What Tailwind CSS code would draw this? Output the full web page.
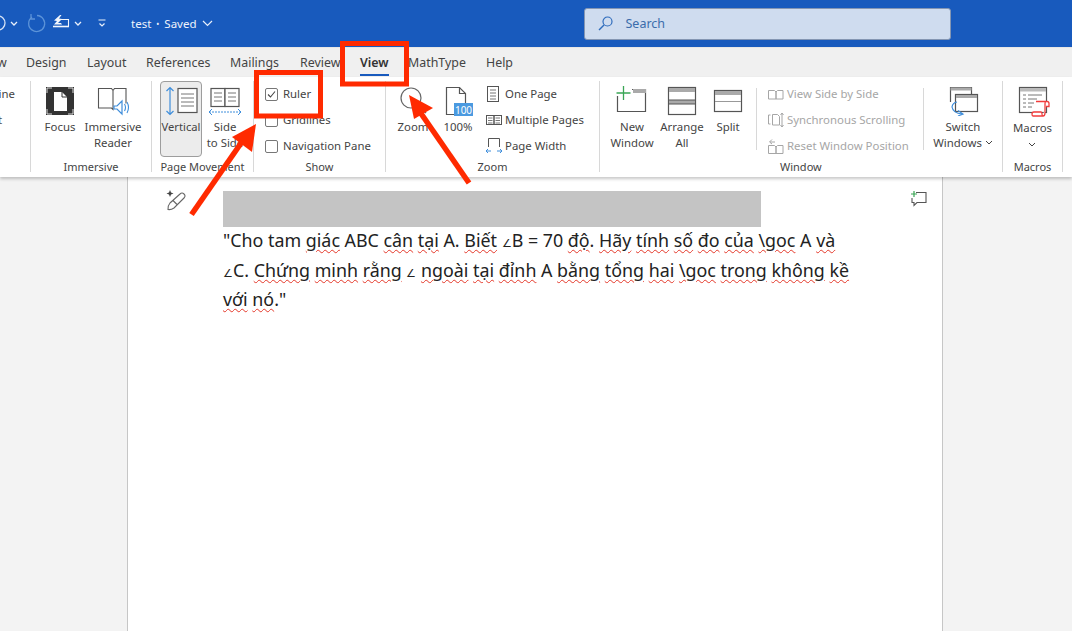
<!DOCTYPE html>
<html lang="vi">
<head>
<meta charset="utf-8">
<title>test - Word</title>
<script src="https://cdn.jsdelivr.net/npm/@tailwindcss/browser@4"></script>
</head>
<body class="w-[1072px] h-[631px] overflow-hidden relative flex flex-col bg-[#f3f3f3] font-['Noto_Sans',sans-serif] text-[12px] text-[#444]">

<!-- Title bar -->
<header class="h-[47px] shrink-0 bg-[#185abd] flex items-center text-white">
  <svg class="w-[120px] h-[47px] shrink-0" viewBox="0 0 120 47" fill="none">
    <circle cx="-2" cy="23" r="7" stroke="#d5e2f5" stroke-width="1.3"/>
    <path d="M11 22l3 3 3-3M75 22l3 3 3-3" stroke="#e8effa" stroke-width="1.3"/>
    <path d="M32 17a8 8 0 1 0 5-1.500M31 14v5h4" stroke="#5c93d8" stroke-width="1.3"/>
    <path d="M60 19.500h8.500v7" stroke="#f2f6fc" stroke-width="1.100"/>
    <path d="M53 26.500h16" stroke="#f2f6fc" stroke-width="1.600"/>
    <path d="M60 15l-6 5.500 3 .5-3 3.500h8l-1-1.500h-3l4-4-3-.5 2.500-3.500z" fill="#f2f6fc"/>
    <path d="M98.500 20h7M99.500 23.500l2.500 2.500 2.500-2.500" stroke="#e8effa" stroke-width="1.200"/>
  </svg>
  <div class="ml-[11px] flex items-center gap-[5px] text-[11.5px] text-[#eef3fb]">
    <span>test</span><span class="text-[8px]">•</span><span>Saved</span>
    <svg class="w-[11px] h-[7px]" viewBox="0 0 11 7" fill="none"><path d="M1 1l4.500 4.500L10 1" stroke="#e8effa" stroke-width="1.200"/></svg>
  </div>
  <div class="ml-[371px] w-[367px] h-[32px] rounded-[3px] bg-[#cfdcef] border border-[#8496b3] flex items-center pl-[13px] text-[#3b6cab] text-[12.500px]">
    <svg class="w-[15px] h-[15px]" viewBox="0 0 15 15" fill="none"><circle cx="9.500" cy="5.500" r="4.500" stroke="#2f6cbc" stroke-width="1.200"/><path d="M6 9l-5 5" stroke="#2f6cbc" stroke-width="1.400"/></svg>
    <span class="ml-[13px] pt-[1px]">Search</span>
  </div>
</header>

<!-- Tabs -->
<nav class="h-[30px] shrink-0 bg-[#f0f0f0] border-t border-[#e6e6e6] pt-[2px] flex items-center text-[12.400px] text-[#444] overflow-hidden">
  <span class="w-[26px] -ml-[3px] pl-0">w</span>
  <span class="w-[61px] ml-[3px]">Design</span>
  <span class="w-[59px]">Layout</span>
  <span class="w-[84px]">References</span>
  <span class="w-[70px]">Mailings</span>
  <span class="w-[60px]">Review</span>
  <span class="w-[48px] relative font-semibold text-[#333]">View<span class="absolute left-0 w-[29px] -bottom-[3px] h-[2px] bg-[#185abd]"></span></span>
  <span class="w-[78px]">MathType</span>
  <span>Help</span>
</nav>

<!-- Ribbon -->
<section class="h-[100px] shrink-0 bg-white pt-[4px] flex relative z-10 shadow-[0_2px_3px_rgba(0,0,0,0.22)] text-[11.400px] leading-[16px]">
  <!-- clipped Views group -->
  <div class="w-[31px] h-[91px] border-r border-[#d8d8d8] overflow-hidden">
    <div class="h-[26px] flex items-center justify-end pr-[15px] whitespace-nowrap">Outline</div>
    <div class="h-[26px] flex items-center justify-end pr-[28px] whitespace-nowrap">Draft</div>
  </div>

  <!-- Immersive -->
  <div class="w-[121px] h-[91px] border-r border-[#d8d8d8] flex flex-col">
    <div class="h-[76px] flex pl-[6px]">
      <div class="w-[46px] pt-[5px] flex flex-col items-center text-center">
        <svg class="w-[30px] h-[30px] mb-[3px]" viewBox="0 0 30 30" fill="none"><rect x="1" y="1" width="28" height="28" fill="#333"/><path d="M2 7V2h5M23 2h5v5M28 23v5h-5M7 28H2v-5" stroke="#ddd" stroke-width="1"/><path d="M9 6h8l5 5v14H9z" fill="#fff"/><path d="M17 6v5h5" stroke="#333" stroke-width="1"/></svg>
        <span>Focus</span>
      </div>
      <div class="w-[60px] pt-[5px] flex flex-col items-center text-center">
        <svg class="w-[34px] h-[30px] mb-[3px]" viewBox="0 0 34 30" fill="none"><path d="M2.500 2.500h13l1.500 2v19l-1.500-1.500h-13zM17 4.500l1.500-2h11.500v15" stroke="#555" stroke-width="1.100"/><path d="M18 20h3l5-5v13l-5-5h-3z" fill="#fff" stroke="#3f8edb" stroke-width="1.200"/><path d="M28.500 18q2 3.500 0 7M31 16q3 5.500 0 11" stroke="#3f8edb" stroke-width="1.100"/></svg>
        <span class="leading-[16px]">Immersive<br>Reader</span>
      </div>
    </div>
    <div class="leading-[10px] mt-[5px] text-center text-[11px]">Immersive</div>
  </div>

  <!-- Page Movement -->
  <div class="w-[102px] h-[91px] border-r border-[#d8d8d8] flex flex-col">
    <div class="h-[76px] flex pl-[8px]">
      <div class="w-[42px] h-[76px] rounded-[4px] bg-[#ececec] border border-[#9d9d9d] pt-[4px] flex flex-col items-center">
        <svg class="w-[34px] h-[30px] mb-[3px]" viewBox="0 0 34 30" fill="none"><path d="M6 2v26M2.500 5L6 1.500 9.500 5M2.500 25L6 28.500 9.500 25" stroke="#3f8edb" stroke-width="1.200"/><rect x="14" y="2.500" width="19" height="24" fill="#fff" stroke="#555" stroke-width="1.200"/><path d="M17 8h13M17 12h13M17 16h13M17 20h13" stroke="#777"/></svg>
        <span class="text-[11.200px] whitespace-nowrap">Vertical</span>
      </div>
      <div class="w-[46px] pt-[5px] flex flex-col items-center text-center">
        <svg class="w-[34px] h-[30px] mb-[3px]" viewBox="0 0 34 30" fill="none"><rect x="3" y="2.500" width="14" height="18" fill="#fff" stroke="#555" stroke-width="1.200"/><rect x="17" y="2.500" width="14" height="18" fill="#fff" stroke="#555" stroke-width="1.200"/><path d="M6 7h8M6 11h8M6 15h8M20 7h8M20 11h8M20 15h8" stroke="#777"/><path d="M1 26h32" stroke="#3f8edb" stroke-dasharray="2 1"/><path d="M4 23l-3 3 3 3M30 23l3 3-3 3" stroke="#3f8edb"/></svg>
        <span class="whitespace-nowrap">Side<br>to Side</span>
      </div>
    </div>
    <div class="leading-[10px] mt-[5px] text-center text-[11px]">Page Movement</div>
  </div>

  <!-- Show -->
  <div class="w-[132px] h-[91px] border-r border-[#d8d8d8] flex flex-col">
    <div class="h-[76px] pl-[11px] flex flex-col">
      <div class="h-[26px] shrink-0 flex items-center gap-[5px]">
        <span class="w-[13px] h-[13px] border border-[#777] rounded-[2px] flex items-center justify-center"><svg class="w-[9px] h-[9px]" viewBox="0 0 9 9" fill="none"><path d="M1 4.500l2.500 2.500L8 1.500" stroke="#444" stroke-width="1.100"/></svg></span><span>Ruler</span>
      </div>
      <div class="h-[26px] shrink-0 flex items-center gap-[5px]"><span class="w-[13px] h-[13px] border border-[#777] rounded-[2px]"></span><span>Gridlines</span></div>
      <div class="h-[26px] shrink-0 flex items-center gap-[5px]"><span class="w-[13px] h-[13px] border border-[#777] rounded-[2px]"></span><span>Navigation Pane</span></div>
    </div>
    <div class="leading-[10px] mt-[5px] text-center text-[11px]">Show</div>
  </div>

  <!-- Zoom -->
  <div class="w-[214px] h-[91px] border-r border-[#d8d8d8] flex flex-col">
    <div class="h-[76px] flex pl-[6px]">
      <div class="w-[42px] pt-[5px] flex flex-col items-center">
        <svg class="w-[30px] h-[30px] mb-[3px]" viewBox="0 0 30 30" fill="none"><circle cx="13" cy="12" r="10" stroke="#666" stroke-width="1.200"/><path d="M21 20l7 7" stroke="#666" stroke-width="1.500"/></svg>
        <span>Zoom</span>
      </div>
      <div class="w-[48px] pt-[5px] flex flex-col items-center">
        <svg class="w-[30px] h-[30px] mb-[3px]" viewBox="0 0 30 30" fill="none"><path d="M3.500 1.500h13l6 6v21h-19z" fill="#fff" stroke="#555" stroke-width="1.200"/><path d="M16.500 1.500v6h6" stroke="#555" stroke-width="1.200"/><rect x="11" y="17" width="19" height="13" fill="#4b9ae0"/><text x="20.500" y="27.500" text-anchor="middle" font-size="10" fill="#fff" font-family="Noto Sans">100</text></svg>
        <span>100%</span>
      </div>
      <div class="flex flex-col ml-[3px]">
        <div class="h-[26px] shrink-0 flex items-center"><svg class="w-[20px] h-[18px]" viewBox="0 0 20 18" fill="none"><rect x="2.500" y="1.500" width="11" height="15" stroke="#555"/><path d="M5 5h6M5 8h6M5 11h6M5 14h6" stroke="#777"/></svg><span>One Page</span></div>
        <div class="h-[26px] shrink-0 flex items-center"><svg class="w-[20px] h-[18px]" viewBox="0 0 20 18" fill="none"><rect x="1.500" y="4.500" width="7.500" height="9" stroke="#555"/><rect x="9" y="4.500" width="7.500" height="9" stroke="#555"/><path d="M3 7h4.500M3 9.500h4.500M3 12h4.500M10.500 7h4.500M10.500 9.500h4.500M10.500 12h4.500" stroke="#777"/></svg><span>Multiple Pages</span></div>
        <div class="h-[26px] shrink-0 flex items-center"><svg class="w-[20px] h-[18px]" viewBox="0 0 20 18" fill="none"><path d="M3.500 10V1.500h11V10" stroke="#555"/><path d="M1 14h5M12 14h5" stroke="#3f8edb"/><path d="M3 12l-2 2 2 2M15 12l2 2-2 2" stroke="#3f8edb"/></svg><span>Page Width</span></div>
      </div>
    </div>
    <div class="leading-[10px] mt-[5px] text-center text-[11px]">Zoom</div>
  </div>

  <!-- Window -->
  <div class="w-[403px] h-[91px] border-r border-[#d8d8d8] flex flex-col">
    <div class="h-[76px] flex pl-[7px]">
      <div class="w-[50px] pt-[5px] flex flex-col items-center text-center">
        <svg class="w-[32px] h-[30px] mb-[3px]" viewBox="0 0 32 30" fill="none"><path d="M1.500 10v15.500h28V3.500H16" stroke="#555" stroke-width="1.200"/><rect x="17" y="3" width="13" height="4" fill="#aaa"/><path d="M7.500 0v14M0.500 7h14" stroke="#3aa655" stroke-width="1.300"/></svg>
        <span>New<br>Window</span>
      </div>
      <div class="w-[50px] pt-[5px] flex flex-col items-center text-center">
        <svg class="w-[30px] h-[30px] mb-[3px]" viewBox="0 0 30 30" fill="none"><rect x="1.500" y="1.500" width="27" height="27" stroke="#555" stroke-width="1.200"/><rect x="2" y="2" width="26" height="4" fill="#aaa"/><rect x="2" y="14" width="26" height="4" fill="#aaa"/><path d="M2 14h26M2 18h26" stroke="#555"/></svg>
        <span>Arrange<br>All</span>
      </div>
      <div class="w-[42px] pt-[5px] flex flex-col items-center">
        <svg class="w-[30px] h-[30px] mb-[3px]" viewBox="0 0 30 30" fill="none"><rect x="1.500" y="4.500" width="27" height="21" stroke="#555" stroke-width="1.200"/><rect x="2" y="5" width="26" height="4" fill="#aaa"/><path d="M2 15.500h26" stroke="#999"/></svg>
        <span>Split</span>
      </div>
      <div class="w-px h-[62px] mt-[7px] ml-[7px] bg-[#d8d8d8]"></div>
      <div class="flex flex-col ml-[10px] w-[156px] text-[#a6a6a6]">
        <div class="h-[26px] shrink-0 flex items-center"><svg class="w-[20px] h-[18px]" viewBox="0 0 20 18" fill="none"><path d="M1.500 5.500h6l1.500 1.500v7H1.500zM9 7l1.500-1.500h5.500V14H9z" stroke="#a6a6a6"/></svg><span>View Side by Side</span></div>
        <div class="h-[26px] shrink-0 flex items-center"><svg class="w-[20px] h-[18px]" viewBox="0 0 20 18" fill="none"><path d="M1.500 4v9M1.500 4h2M1.500 13h2M5.500 3.500h5l2 2V14h-7z" stroke="#a6a6a6"/><path d="M15 2v14M13.500 4L15 2l1.500 2M13.500 14L15 16l1.500-2" stroke="#a6a6a6"/></svg><span>Synchronous Scrolling</span></div>
        <div class="h-[26px] shrink-0 flex items-center"><svg class="w-[20px] h-[18px]" viewBox="0 0 20 18" fill="none"><path d="M1.500 8.500h6l1.500 1.500v6.500H1.500zM9 10l1.500-1.500h5.500v8H9z" stroke="#a6a6a6"/><path d="M8 5H3M5 2.500L2.500 5 5 7" stroke="#a6a6a6"/></svg><span>Reset Window Position</span></div>
      </div>
      <div class="w-px h-[62px] mt-[7px] bg-[#d8d8d8]"></div>
      <div class="w-[78px] pt-[5px] flex flex-col items-center text-center">
        <svg class="w-[32px] h-[30px] mb-[3px]" viewBox="0 0 32 30" fill="none"><path d="M3.500 16V1.500h21V8" stroke="#555" stroke-width="1.200"/><rect x="3.500" y="1.500" width="21" height="3" fill="#aaa"/><rect x="8.500" y="8.500" width="22" height="17" fill="#fff" stroke="#555" stroke-width="1.200"/><rect x="9" y="9" width="21" height="3" fill="#aaa"/><path d="M10 16a6 6 0 0 0-5 5q1 6 10 7M11 24.500l5 3.500-5 2" stroke="#3f8edb" stroke-width="1.200"/></svg>
        <span class="whitespace-nowrap">Switch<br>Windows <svg class="inline w-[8px] h-[5px] mb-[2px]" viewBox="0 0 8 5" fill="none"><path d="M1 1l3 3 3-3" stroke="#444"/></svg></span>
      </div>
    </div>
    <div class="leading-[10px] mt-[5px] text-[11px] pl-[180px]">Window</div>
  </div>

  <!-- Macros -->
  <div class="w-[60px] h-[91px] border-r border-[#d8d8d8] flex flex-col items-center">
    <div class="h-[76px] pt-[5px] flex flex-col items-center">
      <svg class="w-[32px] h-[31px] mb-[3px] overflow-visible" viewBox="0 0 32 31" fill="none"><rect x="3.500" y="1.500" width="27" height="25" fill="#fff" stroke="#555" stroke-width="1.200"/><rect x="4" y="2" width="26" height="3.500" fill="#bbb"/><path d="M7 9h3M12 9h14M7 13h3M12 13h9M7 17h3M12 17h6M7 21h3M12 21h4" stroke="#777"/><path d="M20 15.500h11q2 0 2 2v3h-3M30 15.500q-1 0-1 2V27q0 3-2 3H17q-1 0-1-2t2-2h7q1 0 1 2t1 2" fill="#fff" stroke="#f23c3c" stroke-width="1.300"/></svg>
      <span>Macros</span>
      <svg class="w-[8px] h-[5px] mt-[6px]" viewBox="0 0 8 5" fill="none"><path d="M1 1l3 3 3-3" stroke="#444"/></svg>
    </div>
    <div class="leading-[10px] mt-[5px] text-[11px]">Macros</div>
  </div>
</section>

<!-- Document -->
<main class="flex-1 bg-[#f3f3f3] overflow-hidden">
  <div class="ml-[127px] w-[816px] h-full bg-white border-x border-[#c6c6c6] flex">
    <div class="w-[95px] pl-[37px] pt-[12px]">
      <svg class="w-[22px] h-[22px]" viewBox="0 0 22 22" fill="none"><path d="M5 1l1 2.500L8.500 4.500 6 5.500 5 8 4 5.500 1.500 4.500 4 3.500z" fill="#444"/><path d="M19 5q2 2 0 4L9 19q-3 2-6 1.500Q2.500 17 5 14L15 5q2-2 4 0zM8 11.500l4 4" stroke="#666" stroke-width="1.100"/></svg>
    </div>
    <div class="w-[687px] pt-[14px] text-[17.850px] leading-[29.500px] text-[#222] whitespace-nowrap">
      <div class="w-[538px] h-[36px] bg-[#c4c4c4] mb-[-1px]"></div>
      <p class="h-[29.500px]">"Cho tam <span class="underline decoration-wavy decoration-[#e4382a] decoration-1 underline-offset-2">giác</span> ABC <span class="underline decoration-wavy decoration-[#e4382a] decoration-1 underline-offset-2">cân</span> <span class="underline decoration-wavy decoration-[#e4382a] decoration-1 underline-offset-2">tại</span> A. <span class="underline decoration-wavy decoration-[#e4382a] decoration-1 underline-offset-2">Biết</span> <span class="text-[11px] leading-none">∠</span>B = 70 <span class="underline decoration-wavy decoration-[#e4382a] decoration-1 underline-offset-2">độ</span>. <span class="underline decoration-wavy decoration-[#e4382a] decoration-1 underline-offset-2">Hãy</span> <span class="underline decoration-wavy decoration-[#e4382a] decoration-1 underline-offset-2">tính</span> <span class="underline decoration-wavy decoration-[#e4382a] decoration-1 underline-offset-2">số</span> <span class="underline decoration-wavy decoration-[#e4382a] decoration-1 underline-offset-2">đo</span> <span class="underline decoration-wavy decoration-[#e4382a] decoration-1 underline-offset-2">của</span> <span class="underline decoration-wavy decoration-[#e4382a] decoration-1 underline-offset-2">\goc</span> A <span class="underline decoration-wavy decoration-[#e4382a] decoration-1 underline-offset-2">và</span></p>
      <p class="h-[29.500px]"><span class="text-[11px] leading-none">∠</span>C. <span class="underline decoration-wavy decoration-[#e4382a] decoration-1 underline-offset-2">Chứng</span> <span class="underline decoration-wavy decoration-[#e4382a] decoration-1 underline-offset-2">minh</span> <span class="underline decoration-wavy decoration-[#e4382a] decoration-1 underline-offset-2">rằng</span> <span class="text-[11px] leading-none">∠</span> <span class="underline decoration-wavy decoration-[#e4382a] decoration-1 underline-offset-2">ngoài</span> <span class="underline decoration-wavy decoration-[#e4382a] decoration-1 underline-offset-2">tại</span> <span class="underline decoration-wavy decoration-[#e4382a] decoration-1 underline-offset-2">đỉnh</span> A <span class="underline decoration-wavy decoration-[#e4382a] decoration-1 underline-offset-2">bằng</span> <span class="underline decoration-wavy decoration-[#e4382a] decoration-1 underline-offset-2">tổng</span> <span class="underline decoration-wavy decoration-[#e4382a] decoration-1 underline-offset-2">hai</span> <span class="underline decoration-wavy decoration-[#e4382a] decoration-1 underline-offset-2">\goc</span> <span class="underline decoration-wavy decoration-[#e4382a] decoration-1 underline-offset-2">trong</span> <span class="underline decoration-wavy decoration-[#e4382a] decoration-1 underline-offset-2">không</span> <span class="underline decoration-wavy decoration-[#e4382a] decoration-1 underline-offset-2">kề</span></p>
      <p><span class="underline decoration-wavy decoration-[#e4382a] decoration-1 underline-offset-2">với</span> <span class="underline decoration-wavy decoration-[#e4382a] decoration-1 underline-offset-2">nó</span>."</p>
    </div>
    <div class="pt-[13px]">
      <svg class="w-[17px] h-[18px]" viewBox="0 0 17 18" fill="none"><path d="M6 2.500h10v10H7l-3 3v-3H2V8" stroke="#555" stroke-width="1.100"/><path d="M1 4h6M4 1v6" stroke="#3aa655" stroke-width="1.200"/></svg>
    </div>
  </div>
</main>

<!-- Red annotations drawn over the screenshot -->
<svg class="absolute inset-0 w-[1072px] h-[631px] z-20 pointer-events-none" viewBox="0 0 1072 631" fill="none">
  <rect x="256.500" y="72.500" width="64" height="43.500" stroke="#ff2a00" stroke-width="5"/>
  <rect x="342.500" y="43.500" width="64" height="40.500" stroke="#ff2a00" stroke-width="5"/>
  <path d="M191.500 214.500L246 136" stroke="#ff2a00" stroke-width="5.500"/>
  <polygon points="256,124 232,137 252,152" fill="#ff2a00"/>
  <path d="M469 183L420 112" stroke="#ff2a00" stroke-width="5.500"/>
  <polygon points="409,95 433,108 414,119" fill="#ff2a00"/>
</svg>
</body>
</html>
